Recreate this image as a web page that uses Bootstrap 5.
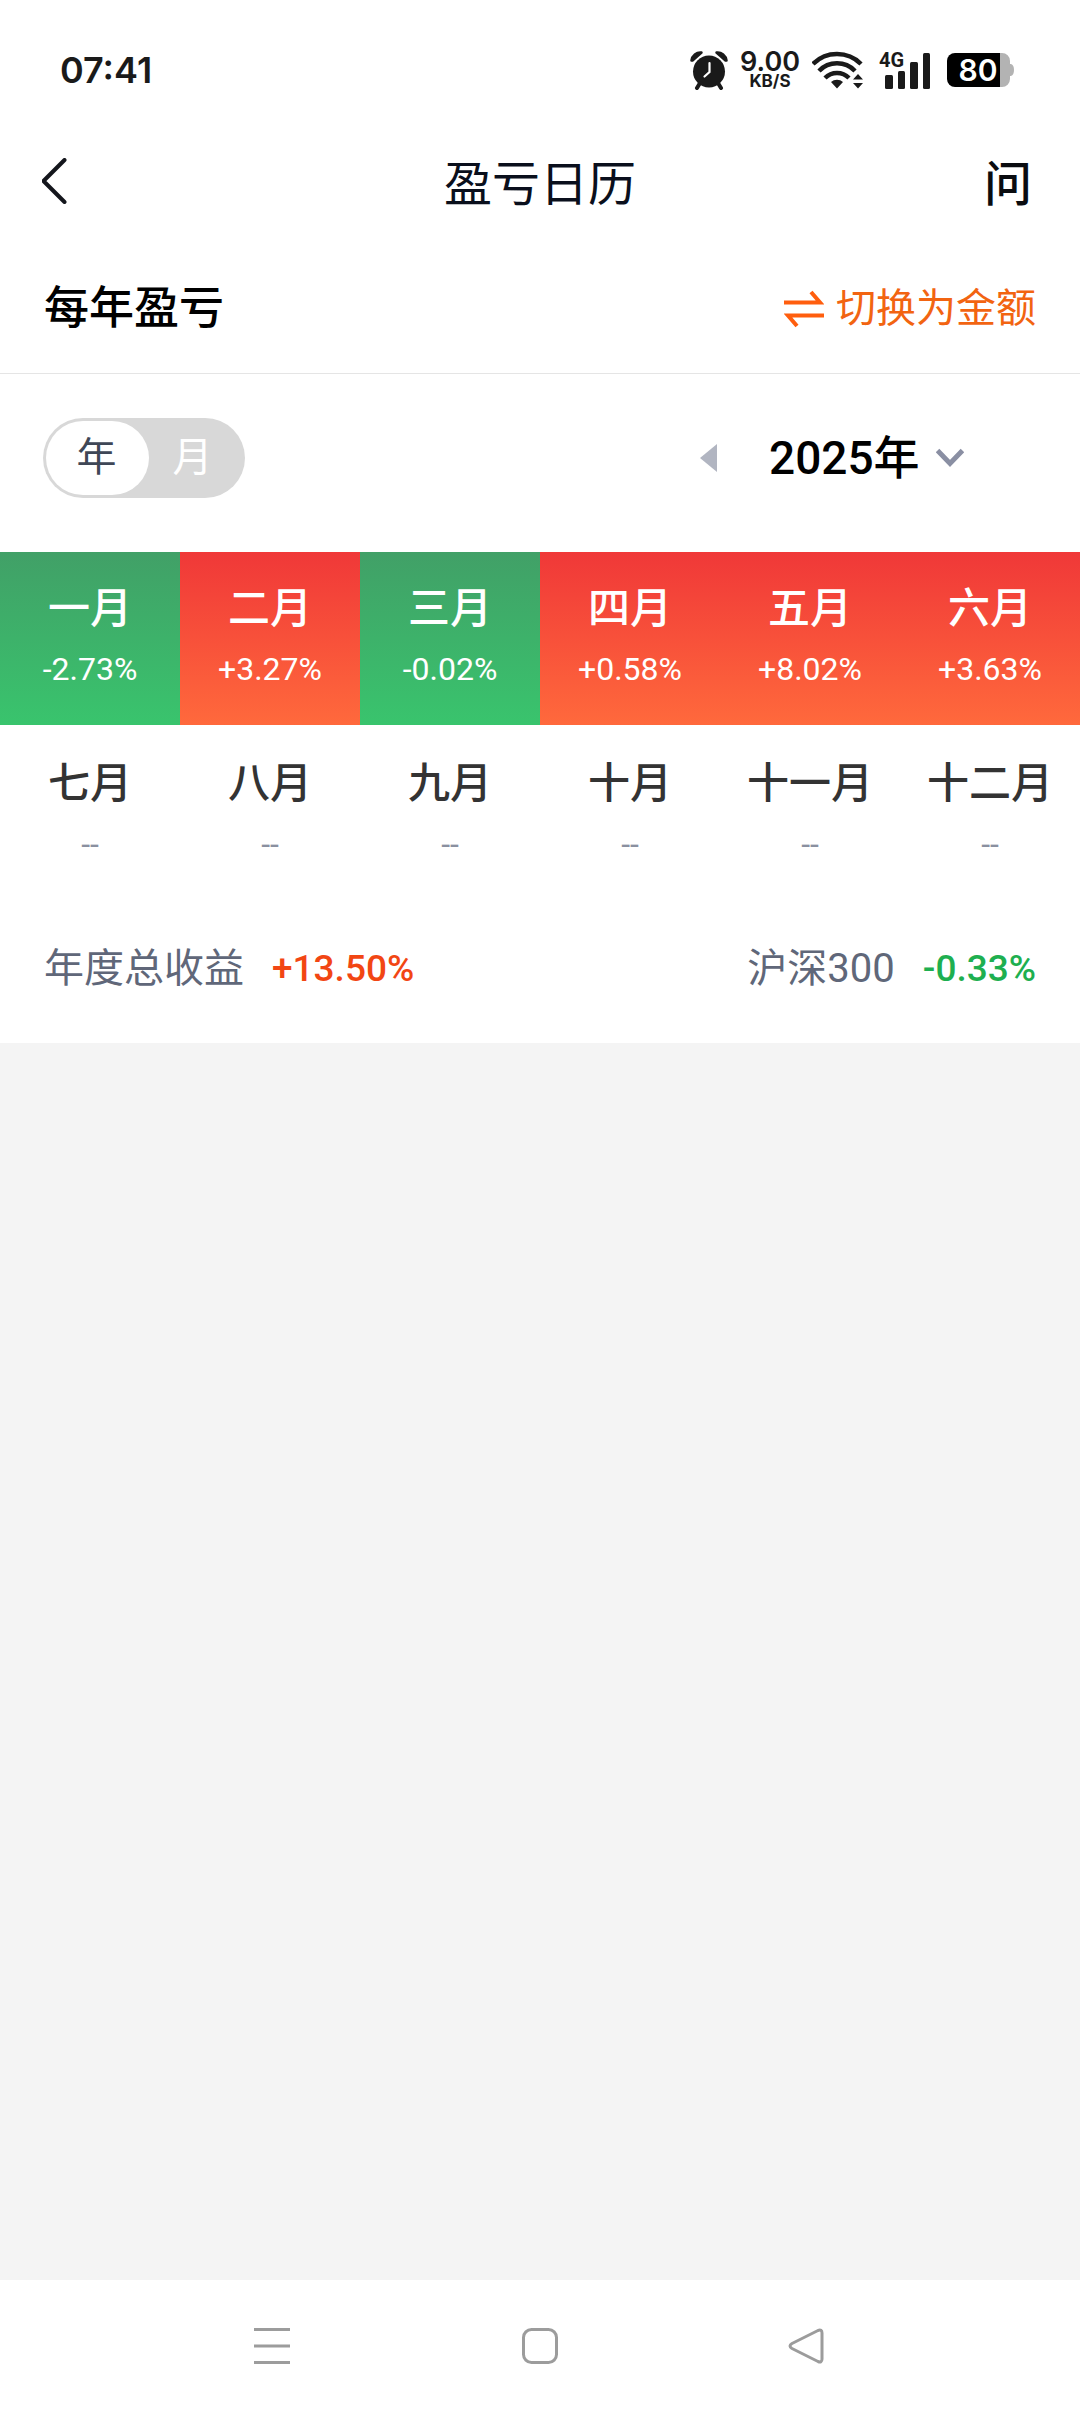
<!DOCTYPE html>
<html lang="zh-CN">
<head>
<meta charset="utf-8">
<meta name="viewport" content="width=device-width, initial-scale=1">
<title>盈亏日历</title>
<link href="https://cdn.jsdelivr.net/npm/bootstrap@5.3.0/dist/css/bootstrap.min.css" rel="stylesheet">
<style>
  body { font-family: Roboto, "Noto Sans CJK SC", sans-serif; background: #f4f4f4; color: #000; }
  svg { display: block; flex: none; }
  .plain-btn { border: 0; background: none; padding: 0; color: inherit; }

  /* status bar */
  .status-bar { height: 140px; padding: 0 66px 0 60px; font-family: Inter, sans-serif; font-weight: 600; color: #1a1a1a; }
  .status-clock { font-size: 36px; line-height: 40px; }
  .status-icons { gap: 12px; }
  .net-speed { font-size: 27px; line-height: 22px; }
  .net-unit { font-size: 17px; line-height: 17px; font-weight: 700; }
  .signal-box, .battery-box { position: relative; margin-left: 4px; }
  .signal-tag { position: absolute; left: 0; top: 0; font: 700 20px/16px Roboto, sans-serif; }
  .battery-level { position: absolute; left: 0; top: 0; width: 62px; text-align: center; color: #fff; font-size: 30px; line-height: 34px; }

  /* title bar */
  .title-bar { height: 89px; padding: 0 42px; color: #0a0f1c; }
  .title-bar h1 { font-size: 48px; line-height: 56px; font-weight: 400; }
  .side-slot { flex: 1 1 0; }
  .ask-btn { margin-right: 6px; font-size: 48px; line-height: 56px; font-weight: 500; color: #0a0c10; }

  /* section head */
  .section-head { padding: 52px 44px 36px; border-bottom: 1px solid #e5e5e5; }
  .section-head h2 { font-size: 45px; line-height: 56px; font-weight: 500; }
  .swap-btn { gap: 12px; font-size: 40px; line-height: 56px; color: #f26411; }

  /* filters */
  .filters { padding: 44px 116px 54px 43px; }
  .period-switch { background: #d8d8d8; border-radius: 40px; padding: 3px; height: 80px; }
  .period-switch label { width: 103px; border-radius: 37px; padding-right: 2px; font-size: 40px; line-height: 74px; text-align: center; color: #fff; cursor: pointer; }
  .period-switch label:last-child { width: 93px; padding-right: 6px; }
  .period-switch .btn-check:checked + label { background: #fff; color: #3f4756; }
  .year-group { gap: 16px; }
  .year-select { appearance: none; border: 0; background: none; padding: 0; color: #000; font-size: 46px; line-height: 56px; height: 56px; font-weight: 500; }
  .prev-year { margin-right: 36px; }

  /* month grid */
  .month-cell { height: 173px; margin-bottom: 2px; padding-top: 33px; text-align: center; white-space: nowrap; }
  .month-name { font-size: 42px; line-height: 48px; font-weight: 500; color: #333; }
  .month-rate { margin-top: 18px; font-size: 32px; line-height: 36px; color: #8a90a0; }
  .rate-up { background: linear-gradient(#f03838, #ff693c); }
  .rate-down { background: linear-gradient(#41a067, #39c46d); }
  .rate-up *, .rate-down * { color: #fff; }

  /* totals */
  .totals { padding: 39px 44px 46px; line-height: 56px; font-size: 40px; color: #606779; }
  .totals strong { margin-left: 28px; font-size: 37px; font-weight: 500; }
  .text-up { color: #f24613; }
  .text-down { color: #1eaf50; }

  .nav-keys { height: 132px; padding: 0 138px; }
  .nav-keys svg { margin: auto; overflow: visible; }
</style>
</head>
<body>
<div class="d-flex flex-column min-vh-100">
  <div class="bg-white">
    <div class="status-bar d-flex justify-content-between align-items-center">
      <span class="status-clock">07:41</span>
      <div class="status-icons d-flex align-items-center">
        <svg width="38" height="40" viewBox="0 0 38 40" fill="#1a1a1a" aria-hidden="true">
          <circle cx="19" cy="21.500" r="16"/>
          <path d="M1.500 10.500A9 9 0 0 1 11.500 2.500L2.500 10.500Z" stroke="#1a1a1a" stroke-width="2.500" stroke-linejoin="round"/><path d="M36.500 10.500A9 9 0 0 0 26.500 2.500L35.500 10.500Z" stroke="#1a1a1a" stroke-width="2.500" stroke-linejoin="round"/>
          <path d="M10 33l-3 5M28 33l3 5" stroke="#1a1a1a" stroke-width="4" stroke-linecap="round"/>
          <path d="M19.500 13v9l-5 4.500" fill="none" stroke="#fff" stroke-width="2.200" stroke-linecap="round"/>
        </svg>
        <div class="text-center">
          <div class="net-speed">9.00</div>
          <div class="net-unit">KB/S</div>
        </div>
        <svg width="51" height="38" viewBox="0 0 51 38" aria-hidden="true">
          <g fill="none" stroke="#1a1a1a" stroke-width="4.500">
            <path d="M1 13A34 34 0 0 1 49 13"/>
            <path d="M7 20A25 25 0 0 1 43 20"/>
            <path d="M13 27A17 17 0 0 1 37 27"/>
          </g>
          <path d="M19 31a9 9 0 0 1 12 0l-6 6.500zM46 23l5 5.500H41zM46 37.500l5-5.500H41z" fill="#1a1a1a"/>
        </svg>
        <div class="signal-box">
          <svg width="52" height="37" viewBox="0 0 52 37" fill="#1a1a1a" aria-hidden="true">
            <rect x="6" y="23" width="8" height="14" rx="1.500"/><rect x="19" y="19" width="7" height="18" rx="1.500"/>
            <rect x="31" y="10" width="8" height="27" rx="1.500"/><rect x="44" y="1" width="7" height="36" rx="1.500"/>
          </svg>
          <span class="signal-tag">4G</span>
        </div>
        <div class="battery-box">
          <svg width="67" height="34" viewBox="0 0 67 34" aria-hidden="true">
            <path d="M53 0h2a8 8 0 0 1 8 8v3h1q3 1 3 6t-3 6h-1v3a8 8 0 0 1-8 8h-2z" fill="#b3b3b3"/>
            <path d="M8 0h45v34H8a8 8 0 0 1-8-8V8a8 8 0 0 1 8-8z" fill="#000"/>
          </svg>
          <span class="battery-level">80</span>
        </div>
      </div>
    </div>

    <header class="title-bar d-flex align-items-center">
      <div class="side-slot">
        <button type="button" class="plain-btn" aria-label="返回">
          <svg width="26" height="46" viewBox="5 2 26 46" fill="none" stroke="#14161c" stroke-width="4" stroke-linecap="round" stroke-linejoin="round"><path d="M27.500 4L6.500 25l21 21"/></svg>
        </button>
      </div>
      <h1 class="m-0">盈亏日历</h1>
      <div class="side-slot text-end"><button type="button" class="plain-btn ask-btn">问</button></div>
    </header>

    <div class="section-head d-flex justify-content-between align-items-center">
      <h2 class="m-0">每年盈亏</h2>
      <button type="button" class="plain-btn swap-btn d-flex align-items-center">
        <svg width="40" height="38" viewBox="0 0 40 38" fill="none" stroke="#ff5e0e" stroke-width="4" aria-hidden="true"><path d="M0 12.500h36L27 2M40 25.500H4L13 36"/></svg>
        <span>切换为金额</span>
      </button>
    </div>

    <div class="filters d-flex justify-content-between align-items-center">
      <div class="period-switch d-flex" role="group" aria-label="统计周期">
        <input type="radio" class="btn-check" name="period" id="period-year" checked>
        <label for="period-year">年</label>
        <input type="radio" class="btn-check" name="period" id="period-month">
        <label for="period-month">月</label>
      </div>
      <div class="year-group d-flex align-items-center">
        <button type="button" class="plain-btn prev-year" aria-label="上一年">
          <svg width="17" height="28" viewBox="0 0 17 28" fill="#b1b5c1"><path d="M17 0v28L0 14z"/></svg>
        </button>
        <select class="year-select" aria-label="年份">
          <option>2025年</option>
        </select>
        <svg width="28" height="20" viewBox="0 0 28 20" fill="none" stroke="#8a8fa3" stroke-width="5" aria-hidden="true"><path d="M1.500 2.500L14 15.500 26.500 2.500"/></svg>
      </div>
    </div>

    <div class="row row-cols-6 g-0">
      <div class="col month-cell rate-down"><div class="month-name">一月</div><div class="month-rate">-2.73%</div></div>
      <div class="col month-cell rate-up"><div class="month-name">二月</div><div class="month-rate">+3.27%</div></div>
      <div class="col month-cell rate-down"><div class="month-name">三月</div><div class="month-rate">-0.02%</div></div>
      <div class="col month-cell rate-up"><div class="month-name">四月</div><div class="month-rate">+0.58%</div></div>
      <div class="col month-cell rate-up"><div class="month-name">五月</div><div class="month-rate">+8.02%</div></div>
      <div class="col month-cell rate-up"><div class="month-name">六月</div><div class="month-rate">+3.63%</div></div>
      <div class="col month-cell"><div class="month-name">七月</div><div class="month-rate">--</div></div>
      <div class="col month-cell"><div class="month-name">八月</div><div class="month-rate">--</div></div>
      <div class="col month-cell"><div class="month-name">九月</div><div class="month-rate">--</div></div>
      <div class="col month-cell"><div class="month-name">十月</div><div class="month-rate">--</div></div>
      <div class="col month-cell"><div class="month-name">十一月</div><div class="month-rate">--</div></div>
      <div class="col month-cell"><div class="month-name">十二月</div><div class="month-rate">--</div></div>
    </div>

    <div class="totals d-flex justify-content-between">
      <div class="d-flex"><span>年度总收益</span><strong class="text-up">+13.50%</strong></div>
      <div class="d-flex"><span>沪深300</span><strong class="text-down">-0.33%</strong></div>
    </div>
  </div>

  <nav class="nav-keys mt-auto bg-white d-flex align-items-center" aria-label="系统导航">
    <button type="button" class="plain-btn col-4" aria-label="最近任务">
      <svg width="36" height="36" viewBox="0 0 36 36" stroke="#9c9c9c" stroke-width="3"><path d="M0 1.500h36M0 18h36M0 34.500h36"/></svg>
    </button>
    <button type="button" class="plain-btn col-4" aria-label="主屏幕">
      <svg width="36" height="36" viewBox="0 0 36 36" fill="none" stroke="#9c9c9c" stroke-width="3"><rect x="1.500" y="1.500" width="33" height="33" rx="8"/></svg>
    </button>
    <button type="button" class="plain-btn col-4" aria-label="返回键">
      <svg width="36" height="36" viewBox="2 0 36 36" fill="none" stroke="#9c9c9c" stroke-width="3" stroke-linejoin="round"><path d="M30 2.500L4 15.500Q0 18 4 20.500L30 33.500Q34 35 34 31V5Q34 1 30 2.500z"/></svg>
    </button>
  </nav>
</div>
<script src="https://cdn.jsdelivr.net/npm/bootstrap@5.3.0/dist/js/bootstrap.bundle.min.js"></script>
</body>
</html>
